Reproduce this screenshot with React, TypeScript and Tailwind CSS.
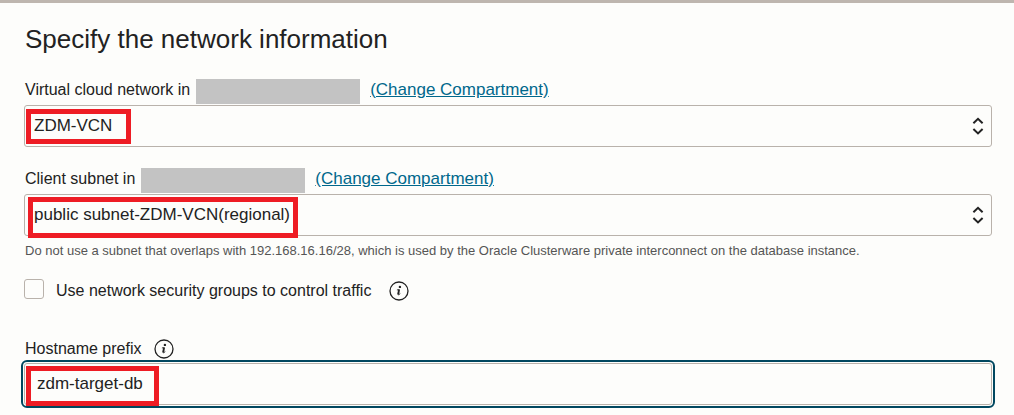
import type { ReactNode } from "react";

function InfoIcon() {
  return (
    <svg width="20" height="20" viewBox="0 0 20 20" fill="none" aria-hidden="true">
      <circle cx="10" cy="10" r="9" stroke="#222" strokeWidth="1.3" />
      <circle cx="10.9" cy="5.9" r="1.2" fill="#222" />
      <path d="M7.9 9 L9.6 8.6 L8.8 13 C8.7 14.1 9.9 14 11.3 12.6" stroke="#222" strokeWidth="0.9" />
      <path d="M10.2 8.3 L9.4 13.3" stroke="#222" strokeWidth="1.6" />
    </svg>
  );
}

function InfoButton({ label }: { label: string }) {
  return (
    <button type="button" aria-label={label} className="block size-5 shrink-0">
      <InfoIcon />
    </button>
  );
}

function Highlight({ className }: { className: string }) {
  return (
    <span
      aria-hidden="true"
      className={`pointer-events-none absolute border-5 border-[#ee1c24] ${className}`}
    />
  );
}

type SelectFieldProps = {
  id: string;
  label: string;
  value: string;
  children: ReactNode;
};

function SelectField({ id, label, value, children }: SelectFieldProps) {
  return (
    <div>
      <div className="flex h-[26px] items-start pl-px leading-[22px]">
        <label htmlFor={id}>{label}</label>
        <span className="ml-1.5 h-[25px] w-[164px] bg-[#c3c3c3]" />
        <a href="#compartment" className="ml-[10px] text-[17px] text-[#00688c] underline">
          (Change Compartment)
        </a>
      </div>
      <div className="relative">
        <select
          id={id}
          defaultValue={value}
          className="block h-[42px] w-full appearance-none rounded-[3px] border border-[#b9b2ab] bg-transparent px-[9px] text-[17px] text-[#222]"
        >
          <option>{value}</option>
        </select>
        <svg
          aria-hidden="true"
          className="pointer-events-none absolute top-3 right-2"
          width="12"
          height="18"
          viewBox="0 0 12 18"
          fill="none"
          stroke="#222"
          strokeWidth="2"
        >
          <path d="M1.4 6.2 6 1.8l4.6 4.4M1.4 12 6 16.4l4.6-4.4" />
        </svg>
        {children}
      </div>
    </div>
  );
}

export default function App() {
  return (
    <main className="min-h-screen border-t-3 border-[#beb6af] bg-[#fdfdfb] pt-5 pr-[22px] pb-2 pl-6 font-['Liberation_Sans',Arial,sans-serif] text-base text-[#222]">
      <h1 className="mb-6 pl-px text-[26px] leading-8">Specify the network information</h1>
      <form className="flex flex-col">
        <SelectField id="vcn" label="Virtual cloud network in" value="ZDM-VCN">
          <Highlight className="top-1 left-0.5 h-[35px] w-[105px]" />
        </SelectField>
        <div className="mt-[21px]">
          <SelectField id="subnet" label="Client subnet in" value="public subnet-ZDM-VCN(regional)">
            <Highlight className="top-[3px] left-1 h-[41px] w-[270px]" />
          </SelectField>
        </div>
        <p className="mt-[5px] pl-px text-[13px] leading-5 text-[#555]">
          Do not use a subnet that overlaps with 192.168.16.16/28, which is used by the Oracle
          Clusterware private interconnect on the database instance.
        </p>
        <div className="mt-[18px] flex items-start">
          <input
            id="nsg"
            type="checkbox"
            className="size-5 appearance-none rounded-[3px] border border-[#b9b2ab]"
          />
          <label htmlFor="nsg" className="ml-3 leading-6">
            Use network security groups to control traffic
          </label>
          <span className="ml-[18px] self-center">
            <InfoButton label="About network security groups" />
          </span>
        </div>
        <div className="mt-[34px] flex items-center gap-3 pl-px">
          <label htmlFor="hostname" className="leading-6">
            Hostname prefix
          </label>
          <InfoButton label="About the hostname prefix" />
        </div>
        <div className="relative mt-0.5">
          <input
            id="hostname"
            type="text"
            defaultValue="zdm-target-db"
            className="block h-[42px] w-full rounded-[3px] border border-[#b9b2ab] bg-transparent px-3 text-[17px] text-[#222] outline-2 outline-offset-1 outline-[#00475f]"
          />
          <Highlight className="top-[3px] left-0.5 h-10 w-[133px]" />
        </div>
      </form>
    </main>
  );
}
